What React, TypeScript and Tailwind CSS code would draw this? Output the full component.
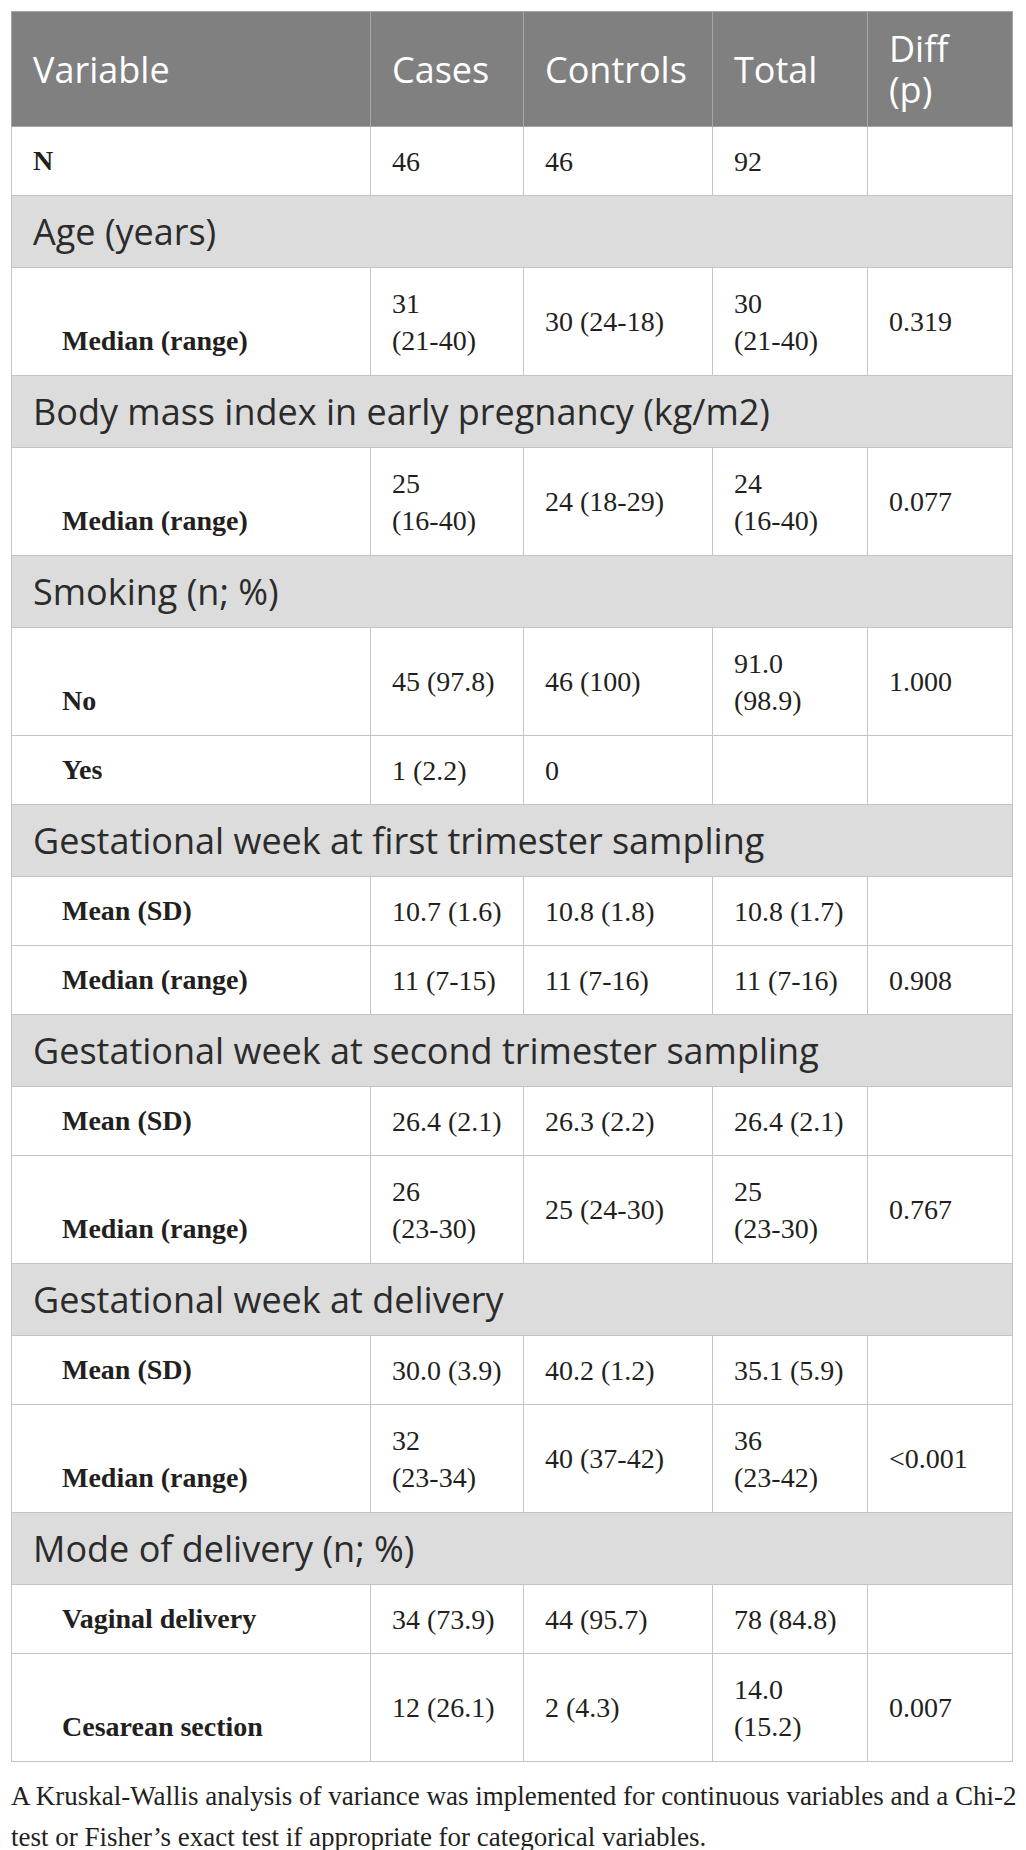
import type React from 'react'

type Cell = string[]

type Row =
  | { kind: 'section'; label: string }
  | { kind: 'data'; label: string; sub?: boolean; cells: Cell[] }

const rows: Row[] = [
  { kind: 'data', label: 'N', cells: [['46'], ['46'], ['92'], []] },
  { kind: 'section', label: 'Age (years)' },
  {
    kind: 'data',
    label: 'Median (range)',
    sub: true,
    cells: [['31', '(21-40)'], ['30 (24-18)'], ['30', '(21-40)'], ['0.319']],
  },
  { kind: 'section', label: 'Body mass index in early pregnancy (kg/m2)' },
  {
    kind: 'data',
    label: 'Median (range)',
    sub: true,
    cells: [['25', '(16-40)'], ['24 (18-29)'], ['24', '(16-40)'], ['0.077']],
  },
  { kind: 'section', label: 'Smoking (n; %)' },
  {
    kind: 'data',
    label: 'No',
    sub: true,
    cells: [['45 (97.8)'], ['46 (100)'], ['91.0', '(98.9)'], ['1.000']],
  },
  { kind: 'data', label: 'Yes', sub: true, cells: [['1 (2.2)'], ['0'], [], []] },
  { kind: 'section', label: 'Gestational week at first trimester sampling' },
  {
    kind: 'data',
    label: 'Mean (SD)',
    sub: true,
    cells: [['10.7 (1.6)'], ['10.8 (1.8)'], ['10.8 (1.7)'], []],
  },
  {
    kind: 'data',
    label: 'Median (range)',
    sub: true,
    cells: [['11 (7-15)'], ['11 (7-16)'], ['11 (7-16)'], ['0.908']],
  },
  { kind: 'section', label: 'Gestational week at second trimester sampling' },
  {
    kind: 'data',
    label: 'Mean (SD)',
    sub: true,
    cells: [['26.4 (2.1)'], ['26.3 (2.2)'], ['26.4 (2.1)'], []],
  },
  {
    kind: 'data',
    label: 'Median (range)',
    sub: true,
    cells: [['26', '(23-30)'], ['25 (24-30)'], ['25', '(23-30)'], ['0.767']],
  },
  { kind: 'section', label: 'Gestational week at delivery' },
  {
    kind: 'data',
    label: 'Mean (SD)',
    sub: true,
    cells: [['30.0 (3.9)'], ['40.2 (1.2)'], ['35.1 (5.9)'], []],
  },
  {
    kind: 'data',
    label: 'Median (range)',
    sub: true,
    cells: [['32', '(23-34)'], ['40 (37-42)'], ['36', '(23-42)'], ['<0.001']],
  },
  { kind: 'section', label: 'Mode of delivery (n; %)' },
  {
    kind: 'data',
    label: 'Vaginal delivery',
    sub: true,
    cells: [['34 (73.9)'], ['44 (95.7)'], ['78 (84.8)'], []],
  },
  {
    kind: 'data',
    label: 'Cesarean section',
    sub: true,
    cells: [['12 (26.1)'], ['2 (4.3)'], ['14.0', '(15.2)'], ['0.007']],
  },
]

const headers: React.ReactNode[] = [
  'Variable',
  'Cases',
  'Controls',
  'Total',
  <>
    <div>Diff</div>
    <div>(p)</div>
  </>,
]

function DataRow({ row }: { row: Extract<Row, { kind: 'data' }> }) {
  // 两行数据的行更高
  const tall = row.cells.some((c) => c.length > 1)
  return (
    <tr className={tall ? 'h-[108px]' : 'h-[69px]'}>
      <td
        className={`border border-[#c4c4c4] pb-[16px] align-bottom text-[28px] leading-[36px] font-bold whitespace-nowrap text-[#231f20] ${
          row.sub ? 'pl-[50px]' : 'pl-[21px]'
        }`}
      >
        {row.label}
      </td>
      {row.cells.map((lines, i) => (
        <td
          key={i}
          className="border border-[#c4c4c4] pl-[21px] align-middle text-[28px] leading-[37px] whitespace-nowrap text-[#231f20]"
        >
          {lines.map((line, j) => (
            <div key={j}>{line}</div>
          ))}
        </td>
      ))}
    </tr>
  )
}

export default function App() {
  return (
    <div className="min-h-[1850px] bg-white px-[11px] pt-[11px] font-['Liberation_Serif',serif]">
      <table className="w-[1001px] table-fixed border-collapse">
        <colgroup>
          <col className="w-[359px]" />
          <col className="w-[153px]" />
          <col className="w-[189px]" />
          <col className="w-[155px]" />
          <col className="w-[145px]" />
        </colgroup>
        <thead>
          <tr className="h-[115px] bg-[#808080]">
            {headers.map((h, i) => (
              <th
                key={i}
                className="border border-[#a6a6a6] pl-[21px] text-left align-middle font-['Open_Sans',sans-serif] text-[36px] leading-[41px] font-normal text-white"
              >
                {h}
              </th>
            ))}
          </tr>
        </thead>
        <tbody>
          {rows.map((row, i) =>
            row.kind === 'section' ? (
              <tr key={i} className="h-[72px] bg-[#dcdcdc]">
                <td
                  colSpan={5}
                  className="border border-[#c4c4c4] pl-[21px] align-middle font-['Open_Sans',sans-serif] text-[36px] leading-[41px] whitespace-nowrap text-[#2b2b2b]"
                >
                  {row.label}
                </td>
              </tr>
            ) : (
              <DataRow key={i} row={row} />
            ),
          )}
        </tbody>
      </table>
      <p className="mt-[14px] w-[1012px] text-[27px] leading-[41px] text-[#231f20]">
        A Kruskal-Wallis analysis of variance was implemented for continuous variables and a Chi-2
        test or Fisher’s exact test if appropriate for categorical variables.
      </p>
    </div>
  )
}
